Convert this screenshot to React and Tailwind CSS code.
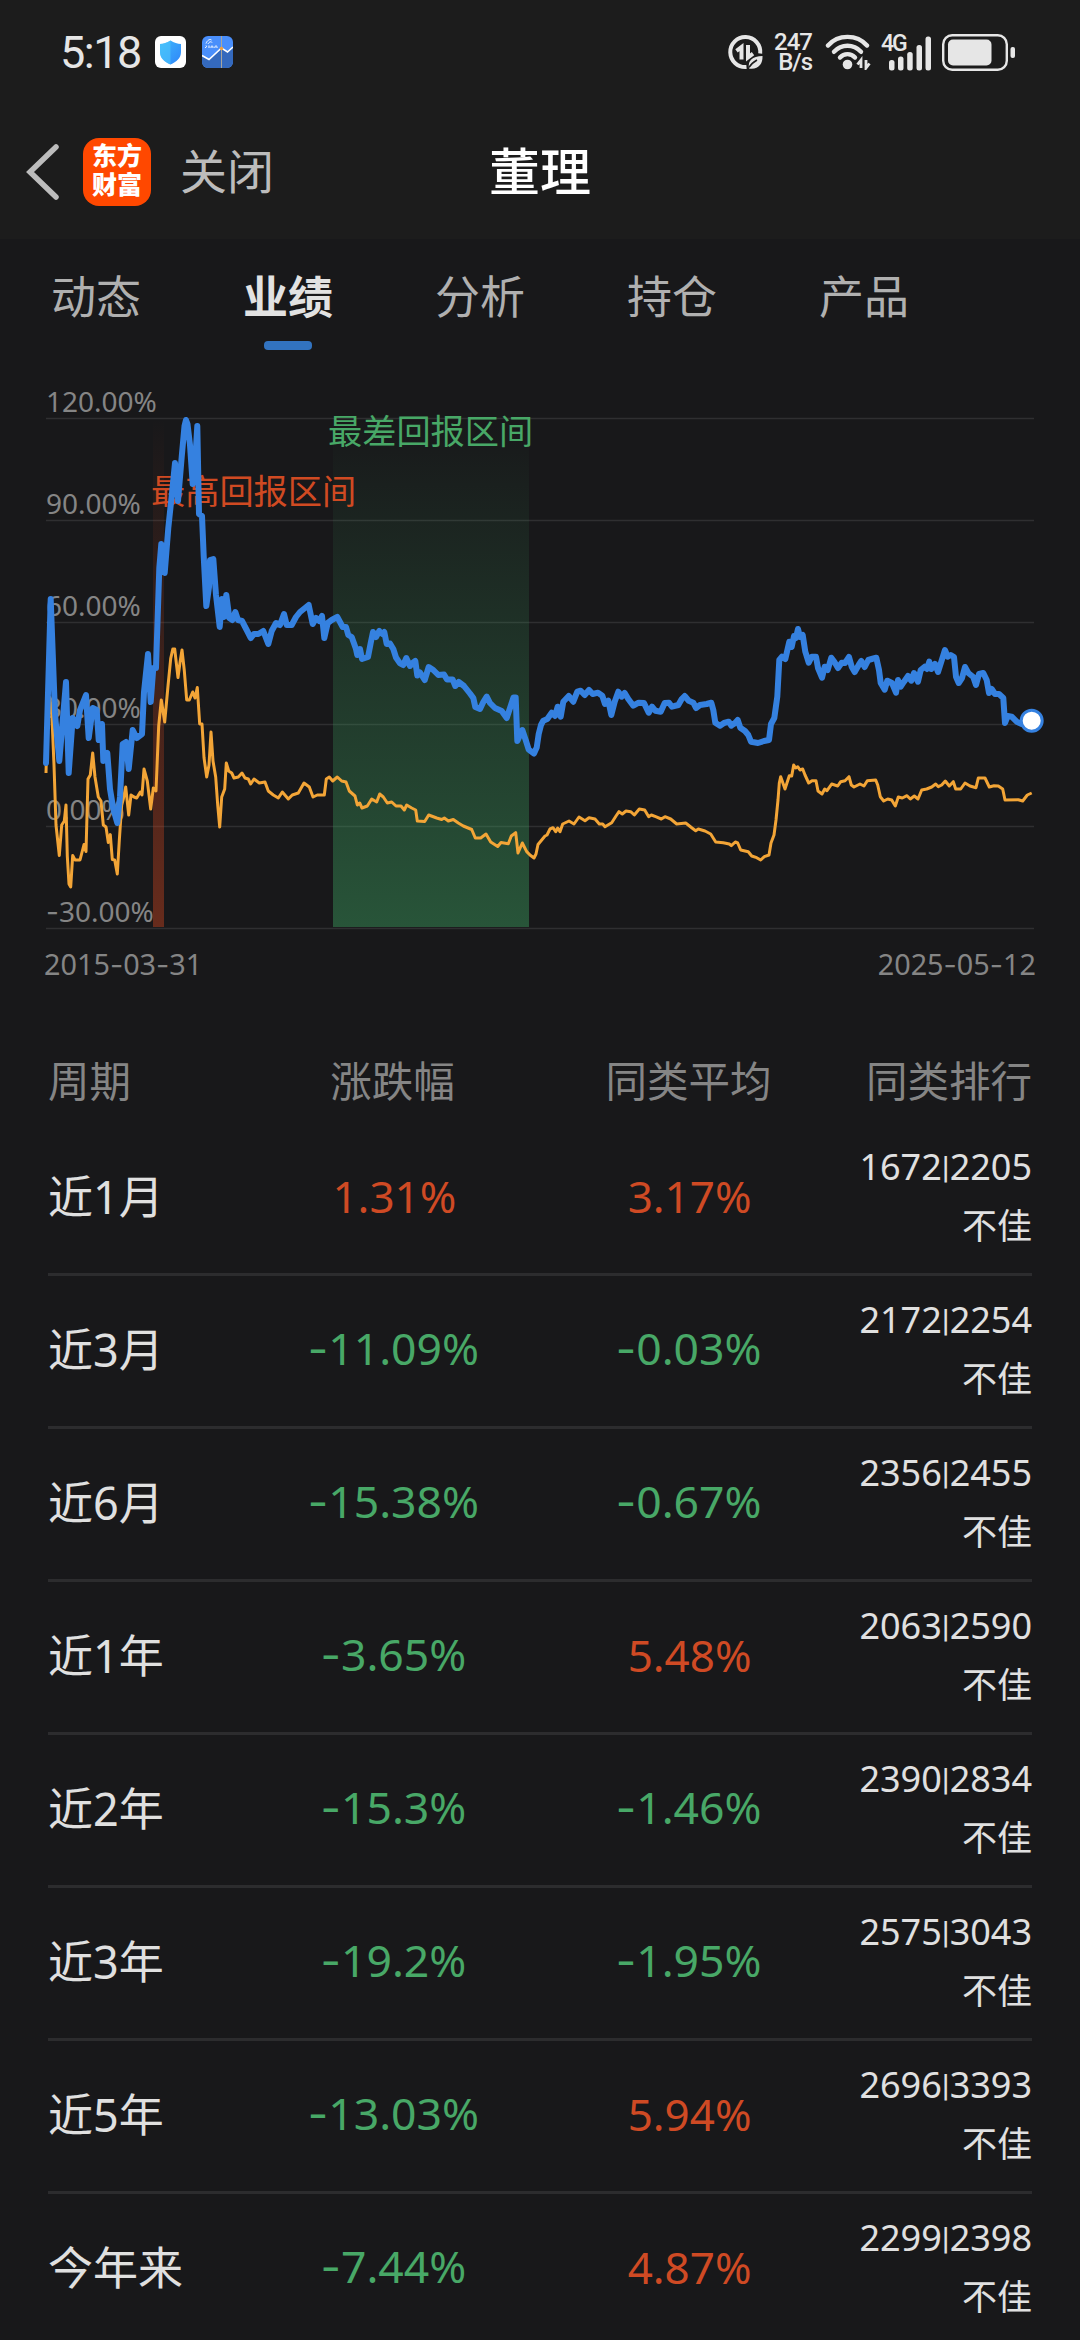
const TABS = ['动态', '业绩', '分析', '持仓', '产品']

const ROWS = [
    { period: '近1月', change: '1.31%', average: '3.17%', rank: 1672, total: 2205 },
    { period: '近3月', change: '-11.09%', average: '-0.03%', rank: 2172, total: 2254 },
    { period: '近6月', change: '-15.38%', average: '-0.67%', rank: 2356, total: 2455 },
    { period: '近1年', change: '-3.65%', average: '5.48%', rank: 2063, total: 2590 },
    { period: '近2年', change: '-15.3%', average: '-1.46%', rank: 2390, total: 2834 },
    { period: '近3年', change: '-19.2%', average: '-1.95%', rank: 2575, total: 3043 },
    { period: '近5年', change: '-13.03%', average: '5.94%', rank: 2696, total: 3393 },
    { period: '今年来', change: '-7.44%', average: '4.87%', rank: 2299, total: 2398 },
]

const GRID = [
    { label: '120.00%', y: 418 },
    { label: '90.00%', y: 520 },
    { label: '60.00%', y: 622 },
    { label: '30.00%', y: 724 },
    { label: '0.00%', y: 826 },
    { label: '-30.00%', y: 928 },
]

// manager's own return
const FUND_LINE = `46,763 50.7,599 55,714 59.3,761 66,682 68.7,773 72.7,718 77.3,726 80,710 86,695 88.7,738 92.7,708
96.7,710 98.7,740 102,724 103.3,761 107.3,753 110,789 113.3,809 117.3,823 120,797 122.7,744 126,742 128.7,769
132.7,730 136.7,738 142,734 144,692 148,654 150.7,702 153.3,668 156,668 159.3,568 161.3,544 164.7,573 168.3,528
172,493 175,463 178,501 181.7,457 184.5,426 186,420 187.5,424 190,445 192.7,484 195,465 197.3,426 199,514 202,516
203.7,556 206.3,606 209,587 210,560 213.3,559 216,595 219.7,627 222,599 224,617 226.3,595 229.3,618 232.3,620
235.3,612 238,620 242,621 246.7,630 250.7,638 254,634 258.3,634 263.3,631 268.3,644 271.7,631 276,623 280,625
284,614 286.7,625 291.7,625 296,617 300,612 305,608 308.7,605 312.7,624 316,618 319.3,621 322,616 324.3,638
327.7,623 331.7,620 337.3,617 342.7,627 346,627 348.3,635 351.7,637 356,649 357.3,655 360,649 362,659 368,657
370.7,643 373,632 376,637 379.3,631 382.3,634 384.3,632 386.7,644 390,643.6 393.3,649 396,657.5 400,663.4
403.3,665 406.3,658 410,666 412.7,663 415.3,661 417.3,675.6 420,672.5 424.7,680 428.7,667 433.3,670 438.3,675
444,674.5 447,679.6 452.7,679.6 455.3,686 458.7,682 464,686 470,693.5 473.3,698 475.3,707 480,709 483.3,702
486.7,696.6 490,703 495,708 501.7,711 506.7,718 510.7,706 513.5,697.5 515.7,697.5 517.3,741 522.3,730 525.7,740
528.7,749.6 534,753.5 536.7,747.6 538.7,734 541,725 543.3,720.7 547.3,719 551.7,712.7 555,716 557.7,706.7
560.7,716.7 563.3,701.7 568.7,696 573.3,701.7 577.3,691.7 580.7,690.7 584.7,695 589,690 592.7,694 598,692.7
602.3,695.7 605,704 608.3,700.7 611.3,715 614.7,701.7 618.3,691.7 621.7,696.7 624.7,693 628.3,699 633.3,705.7
638.7,702.7 644,703 648.7,712.7 652,706.7 655.3,710.7 660.7,711.7 664.7,703 669,702.7 672,706.7 678.3,705
681.7,699 684.7,696 688.7,700.7 693.3,702.7 696,708 700,705 706.7,704 711.3,702.7 713.3,710 715.3,722.7
720,725.7 724,723 728.7,721.7 731.3,725.7 735,723 737.7,720 740.3,727.7 745,731 748.3,735 751,741.7 758,743
764,741 769,740 771,724 774.3,718 777.3,696.7 779.3,660 782,656.7 785.3,659 787,651.7 789.3,641.7 791.7,647
794,636 796,638 798,629 800,637 802.7,635 805.3,651.7 808.7,662.7 811.7,656.7 816,656.7 818,668 822,677.7
824.7,666.7 827.7,670 831.3,657.7 834.3,661.7 838,668 841.7,662.7 845,663 849,657 851.7,666.7 854.7,672
858.7,665 861.3,661 864.7,667 868.3,660 871.7,659 876.3,657.7 879,670 880.7,683 884.7,689.7 887.3,680.7
892,683 896,692.7 898,680 900.7,686.7 904,681.7 908,676 911.3,680.7 914,673 918,681.7 920.7,670 924.7,666.7
927,669 929.3,661.7 931.3,669 935,664 938,672 941.3,661.7 945,650 947.7,656.7 950.7,655 954,657 956,676.7
958.7,683 962,678 965,667 968.3,673 973.3,677 976,685 979,674 983.3,673 986.7,680 989,693 991.7,689 995,694
999,694 1003.3,698 1004.3,713 1005,723 1007.7,716 1011.7,716.7 1016.7,721.7 1021.7,724 1031.7,721`

// benchmark
const INDEX_LINE = `46,773 47.7,706 50,697.5 52,718 54,765 56,825 59.3,855.5 61.7,825 64.3,821 66,805 67.3,856 69,884
70.7,887 72.7,855.5 75,860 80,860 84,844.5 86,851.5 88,779 90.3,775 92.7,753 95,777 98.3,797 101,801 103.3,825
106,827 108.3,842.5 110.3,834.6 112.3,859.5 114.7,860 117.3,874 119.3,840.5 121.7,805 123.3,799 125.7,787
128.7,815 131,795 134,797 136.7,798 140.3,792 142,795 144,769 147.3,781 150.7,809 153.3,788 156,791 158.7,726
161.3,700 164.7,722 168,686 170.7,658.6 172.8,649 174.7,649 178,677.6 180,662.6 182,650 184.3,670.5 186.7,700
189.3,700 192.7,692 195,698 197.3,687.5 199.7,724 202,724 204,757.5 206.7,777 209,765 211,732 213,761 215.7,777
217.7,805 219.7,827 221.7,797 224.7,789 226.3,763 228.7,771 231.7,773 234,778 238.3,777 242,773 245,778
248.3,779 250.7,784 254,779 259.3,783 265,782 268.3,791 273.3,795 278.3,798 282.3,792 288.3,799 292.3,795
298.3,793 304,783 309.3,787 313,797 317.3,795 324.3,795 326.3,779 329.3,777 332.7,781 337.3,777 341.7,781
346,782 349.3,791 355,796 357.3,805 359.7,803 362,808 367.3,806 371.7,799 376.7,802 379.7,794 383.3,797
387.3,803 391.7,802 396,806 401,806 404.3,810 406.7,805 411.7,808 415.7,810 417.3,821 424.7,821.5 428.7,815
436.7,818 441.7,819.5 444.3,818 448.3,821 453.3,819.5 458.3,823 463.3,826 471.7,829.5 475.3,838 480.7,838
486,834 490.7,842 497.7,846.5 501,842.5 508.3,843.7 511.3,836 515.7,832.6 518,853 522.3,843 526.7,851.6
530,855 534,858 536,854 538,844.5 545,836 547,835 550,829 553,827.7 555.7,831.7 557.7,828 560,831.7 562.7,824
569,821 574,824 579,817 585,820.7 589,817.7 595,819 599.3,824 602.7,824 605,826.7 611.7,822.7 616,816
619,811.7 622.3,814 626,811 630.7,811.7 634.3,815 639.3,809 644.7,810 648.7,816.7 651.3,815 655.7,816.7
661.3,819 665,816.7 670.7,819 676.7,824 685.7,823 691.7,827.7 695.7,830.7 698.3,829 705,831 710.7,834
715.7,842 723.3,842.7 729.3,844 731.3,845.7 735.3,842 737.7,843 740.7,850 748.3,851.7 751.7,856 756.7,857.7
760.7,860 764.3,856.7 769,855 771,843 774,835 776,820 778,800 779.3,783 780.7,776.7 785,789 789.3,775.7
791.7,776 793.7,765 795.7,768 797.7,766.7 800,770 802.7,769 805,775 808.7,783 812,780.7 816,780.7 818,791
822,794 824.7,789 827,790.7 831.7,784 837.7,786 840.7,781.7 845,780.7 849,776.7 851.3,785 854,787 860,784
864,786 867.3,780.7 875.7,780 877.7,785 880.3,796.7 883.7,801 887.7,799 891.7,800 895.3,806 898.3,797 902.3,798
907,795.7 910.3,799 914.3,796 918,799 921.7,790 926.7,789 931.7,787 935.7,784 938.3,786.7 941.7,785 945.3,781
949.3,786 953.3,781.7 955.7,789 960.7,789 965,783 970,786 976,787.7 978.3,778 985,778 989.3,787 994,785.7
998.3,786 1002.7,789 1005,800 1018.3,799.7 1022.7,801 1027.3,795 1031.7,793`

function StatusBar() {
    return (
        <div className="flex h-[104px] items-center pl-[60px] pr-[64px] text-[#e6e6e6]">
            <span className="w-[95px] font-['Roboto'] text-[45px] leading-none tracking-[-1.5px]">5:18</span>
            <svg className="h-8 w-[31px]" viewBox="0 0 31 32">
                <defs>
                    <linearGradient id="shield" x1="0" y1="0" x2="1" y2="1">
                        <stop offset="0" stopColor="#3fb8fb" />
                        <stop offset="1" stopColor="#2f86fa" />
                    </linearGradient>
                </defs>
                <rect width="31" height="32" rx="6" fill="#fff" />
                <path d="M15.5 4.5c3.5 2.3 7 3.2 10.5 3.5v8c0 6-4.5 10-10.5 12.5C9.5 26 5 22 5 16V8c3.5-.3 7-1.2 10.5-3.5z" fill="url(#shield)" />
                <path d="M15.5 4.5v24C9.5 26 5 22 5 16V8c3.5-.3 7-1.2 10.5-3.5z" fill="#4cc7fc" opacity=".6" />
            </svg>
            <svg className="ml-4 h-8 w-[31px]" viewBox="0 0 31 32">
                <rect width="31" height="32" rx="6" fill="#4a8ffb" />
                <path d="M0 19.5l7 4L19.5 12l6 4 5.500-5v15a6 6 0 0 1-6 6H6a6 6 0 0 1-6-6z" fill="#3469bd" />
                <path d="M0 19.5l7 4L19.5 12l6 4 5.500-5" fill="none" stroke="#fff" strokeWidth="1.6" />
                <path d="M19.5 0v32" stroke="#a8a69e" strokeWidth="1" />
                <circle cx="19.5" cy="12.5" r="1.8" fill="#f0a040" />
                <path d="M3 11.5c1.5.3 2-1 1-2M4 7.5c1-3 4-5 5.500-3.500M6 8c1-2 3-3 4-1.500M7 12V9.5M9 12c0-3 2-3 2 0M13 12c-1-2 2-3 2-1v1" fill="none" stroke="#fff" strokeWidth="1" />
            </svg>
            <div className="ml-auto flex items-center">
                <svg className="h-[38px] w-[35px]" viewBox="0 0 35 38" fill="none" stroke="currentColor">
                    <path d="M32.2 20.5A15 15 0 1 0 18.5 34" strokeWidth="4" />
                    <path d="M13.5 26.500V14L8.500 17.800M20 12v12.500l5-3.800" strokeWidth="4" />
                    <path d="M21 35.500c-1.500-8 3-12 13.500-12.500C35 31 30 37 21 35.500z" fill="currentColor" stroke="none" />
                    <path d="M21 34.500c2-3.500 4.500-5.500 8-7.500" stroke="#1c1c1c" strokeWidth="1.5" />
                </svg>
                <div className="ml-3 flex w-[38px] flex-col items-end pr-px font-['Roboto'] text-[24px] font-medium leading-[20px] tracking-[-1px]">
                    <span>247</span>
                    <span>B/s</span>
                </div>
                <svg className="ml-3 h-[36px] w-[46px]" viewBox="0 0 46 36" fill="none" stroke="currentColor" strokeLinecap="round">
                    <path d="M3 11.500c10-11.500 29-11.500 39 0" strokeWidth="4.4" />
                    <path d="M9 17.800c7.500-8 19.500-8 27 0" strokeWidth="4.4" />
                    <path d="M15 23.500c4-4.500 11-4.500 15 0" strokeWidth="4.4" />
                    <circle cx="22.5" cy="30.5" r="4.8" fill="currentColor" stroke="none" />
                    <path d="M36 34v-8l-3.500 4.500M41 26v8l3.500-4.500" strokeWidth="2.8" strokeLinecap="butt" />
                </svg>
                <div className="relative ml-2.5 h-[37px] w-[53px]">
                    <span className="absolute -top-px left-0 font-['Roboto'] text-[23px] font-medium leading-[22px] tracking-[-2px]">4G</span>
                    <svg className="h-full w-full" viewBox="0 0 53 37" fill="currentColor">
                        <rect x="8" y="26" width="5.5" height="10.5" rx="2.5" />
                        <rect x="17" y="22.5" width="5.5" height="14" rx="2.5" />
                        <rect x="26.2" y="18" width="5.5" height="18.5" rx="2.5" />
                        <rect x="35.5" y="11" width="5.5" height="25.5" rx="2.5" />
                        <rect x="44.5" y="2.5" width="5.5" height="34" rx="2.5" />
                    </svg>
                </div>
                <svg className="ml-2 h-[37px] w-[74px]" viewBox="0 0 74 37" fill="currentColor">
                    <rect x="1.2" y="1.2" width="63.6" height="34.6" rx="9" fill="none" stroke="currentColor" strokeWidth="2.4" />
                    <rect x="6" y="5.5" width="43.5" height="26" rx="5" />
                    <rect x="68.5" y="13" width="4.5" height="11" rx="2" />
                </svg>
            </div>
        </div>
    )
}

function TitleBar() {
    return (
        <div className="grid h-[135px] grid-cols-[1fr_auto_1fr] items-center">
            <div className="flex items-center">
                <svg className="ml-6 h-[58px] w-[36px]" viewBox="0 0 36 58" fill="none" stroke="#bcbcbc" strokeWidth="5.5" strokeLinecap="round">
                    <path d="M32 4L6 29l26 25" />
                </svg>
                <div className="ml-[23px] flex h-[68px] w-[68px] flex-col items-center justify-center rounded-2xl bg-[#ff4800] pb-1 text-[25px] font-black leading-[29px] text-white">
                    <span>东方</span>
                    <span>财富</span>
                </div>
                <span className="ml-[29px] pb-px text-[47px] leading-none text-[#bcbcbc]">关闭</span>
            </div>
            <h1 className="text-[51px] font-medium leading-none text-white">董理</h1>
        </div>
    )
}

function TabBar() {
    return (
        <div className="flex h-[116px]">
            {TABS.map((tab) => {
                const active = tab === '业绩'
                return (
                    <div key={tab} className="flex w-48 flex-col items-center pt-[34px]">
                        <span className={active ? 'text-[45px] font-bold leading-[48px] text-[#e2e2e2]' : 'text-[45px] leading-[48px] text-[#b0b0b0]'}>
                            {tab}
                        </span>
                        {active && <div className="mt-[20px] h-[9px] w-12 rounded-[4px] bg-[#3273c0]" />}
                    </div>
                )
            })}
        </div>
    )
}

function Chart() {
    return (
        <svg className="block h-[685px] w-full" viewBox="0 355 1080 685" fill="none">
            <defs>
                <linearGradient id="worst" x1="0" y1="0" x2="0" y2="1">
                    <stop offset="0" stopColor="#3da562" stopOpacity="0" />
                    <stop offset="1" stopColor="#3da562" stopOpacity=".43" />
                </linearGradient>
                <linearGradient id="best" x1="0" y1="0" x2="0" y2="1">
                    <stop offset="0" stopColor="#d0451f" stopOpacity="0" />
                    <stop offset="1" stopColor="#d0451f" stopOpacity=".43" />
                </linearGradient>
            </defs>
            {GRID.map(({ label, y }) => (
                <g key={label}>
                    <path d={`M46 ${y + 0.5}H1034`} stroke="#2f2f31" strokeWidth="1.5" />
                    <text x="46" y={y - 6} fill="#858585" fontSize="28">
                        <Figure value={label} />
                    </text>
                </g>
            ))}
            <rect x="153" y="418" width="11" height="509" fill="url(#best)" />
            <rect x="333" y="418" width="196" height="509" fill="url(#worst)" />
            <text x="151" y="504" fill="#d04a22" fontSize="34.2">最高回报区间</text>
            <polyline points={INDEX_LINE} stroke="#f3a537" strokeWidth="3" strokeLinejoin="round" />
            <polyline points={FUND_LINE} stroke="#3581e0" strokeWidth="6" strokeLinejoin="round" strokeLinecap="round" />
            <text x="328" y="444" fill="#48a867" fontSize="34.2">最差回报区间</text>
            <circle cx="1031.7" cy="720.7" r="10.5" fill="#fff" stroke="#3581e0" strokeWidth="3" />
            <text x="44" y="975" fill="#858585" fontSize="28.8">
                <Figure value="2015-03-31" />
            </text>
            <text x="1036" y="975" fill="#858585" fontSize="28.8" textAnchor="end">
                <Figure value="2025-05-12" />
            </text>
        </svg>
    )
}

// the hyphen of Noto Sans is too short beside figures, Inter has a longer one
function Figure({ value }) {
    return value.split(/(-)/).map((part, i) =>
        part === '-' ? <tspan key={i} className="font-['Inter']">-</tspan> : part
    )
}

function Percent({ value }) {
    const negative = value.startsWith('-')
    return (
        <span className={negative ? 'pl-0.5 text-center text-[44.5px] text-[#48a867]' : 'pl-1 text-center text-[44px] text-[#cf4a24]'}>
            {negative && <span className="font-['Inter']">-</span>}
            {value.replace('-', '')}
        </span>
    )
}

function PerformanceTable() {
    return (
        <div className="mx-12">
            <div className="grid h-[83px] grid-cols-[2fr_3fr_3fr_2fr] items-center text-[41.5px] leading-none text-[#858585]">
                <span>周期</span>
                <span className="text-center">涨跌幅</span>
                <span className="pl-0.5 text-center">同类平均</span>
                <span className="whitespace-nowrap text-right">同类排行</span>
            </div>
            {ROWS.map((row) => (
                <div key={row.period} className="grid h-[153px] grid-cols-[2fr_3fr_3fr_2fr] items-center border-b-3 border-[#2c2c2e] pb-1 leading-none">
                    <span className="text-[45px] text-[#e0e0e0]">{row.period}</span>
                    <Percent value={row.change} />
                    <Percent value={row.average} />
                    <div className="flex flex-col text-right text-[36px] leading-[59px] text-[#e0e0e0]">
                        <span className="whitespace-nowrap">
                            {row.rank}
                            <span className="align-[2px] font-['Roboto'] text-[32px] leading-none">|</span>
                            {row.total}
                        </span>
                        <span className="text-[35px]">不佳</span>
                    </div>
                </div>
            ))}
        </div>
    )
}

export default function App() {
    return (
        <div className="h-[2340px] w-[1080px] overflow-hidden bg-[#18181a] font-['Noto_Sans','Noto_Sans_CJK_SC',sans-serif]">
            <header className="bg-[#1c1c1c]">
                <StatusBar />
                <TitleBar />
            </header>
            <TabBar />
            <Chart />
            <PerformanceTable />
        </div>
    )
}
